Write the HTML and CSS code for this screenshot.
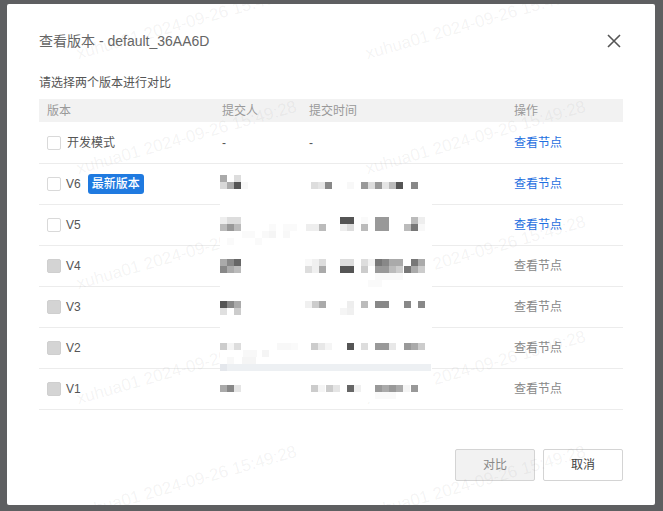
FILE: index.html
```html
<!DOCTYPE html>
<html lang="zh">
<head>
<meta charset="utf-8">
<title>查看版本</title>
<link rel="stylesheet" href="styles.css">
</head>
<body>
<div class="dialog">
  <div class="dialog-head">
    <h1 class="title">查看版本 - default_36AA6D</h1>
    <svg class="close" width="14" height="14" viewBox="0 0 14 14"><path d="M1 1l12 12M13 1L1 13" fill="none" stroke="#555" stroke-width="1.6"/></svg>
  </div>
  <p class="hint">请选择两个版本进行对比</p>
  <div class="row head"><span>版本</span><span>提交人</span><span>提交时间</span><span>操作</span></div>
  <div class="rows">
    <div class="row"><span class="ver"><i class="check"></i><span class="cn">开发模式</span></span><span>-</span><span>-</span><a class="link">查看节点</a></div>
    <div class="row"><span class="ver"><i class="check"></i>V6<b class="badge">最新版本</b></span><span></span><span></span><a class="link">查看节点</a></div>
    <div class="row"><span class="ver"><i class="check"></i>V5</span><span></span><span></span><a class="link">查看节点</a></div>
    <div class="row"><span class="ver"><i class="check off"></i>V4</span><span></span><span></span><a class="link off">查看节点</a></div>
    <div class="row"><span class="ver"><i class="check off"></i>V3</span><span></span><span></span><a class="link off">查看节点</a></div>
    <div class="row"><span class="ver"><i class="check off"></i>V2</span><span></span><span></span><a class="link off">查看节点</a></div>
    <div class="row"><span class="ver"><i class="check off"></i>V1</span><span></span><span></span><a class="link off">查看节点</a></div>
  </div>
  <div class="foot">
    <button class="btn off">对比</button>
    <button class="btn">取消</button>
  </div>
</div>
<div class="marks">
  <span>xuhua01 2024-09-26 15:49:28</span><span>xuhua01 2024-09-26 15:49:28</span><span>xuhua01 2024-09-26 15:49:28</span><span>xuhua01 2024-09-26 15:49:28</span>
  <span>xuhua01 2024-09-26 15:49:28</span><span>xuhua01 2024-09-26 15:49:28</span><span>xuhua01 2024-09-26 15:49:28</span><span>xuhua01 2024-09-26 15:49:28</span>
  <span>xuhua01 2024-09-26 15:49:28</span><span>xuhua01 2024-09-26 15:49:28</span><span>xuhua01 2024-09-26 15:49:28</span><span>xuhua01 2024-09-26 15:49:28</span>
  <span>xuhua01 2024-09-26 15:49:28</span><span>xuhua01 2024-09-26 15:49:28</span><span>xuhua01 2024-09-26 15:49:28</span><span>xuhua01 2024-09-26 15:49:28</span>
  <span>xuhua01 2024-09-26 15:49:28</span><span>xuhua01 2024-09-26 15:49:28</span><span>xuhua01 2024-09-26 15:49:28</span><span>xuhua01 2024-09-26 15:49:28</span>
</div>
<svg class="redaction" width="663" height="511" viewBox="0 0 663 511">
  <rect x="220" y="176" width="212" height="226" fill="#fff"/>
  <!-- V6 -->
  <rect x="220" y="175" width="7" height="7" fill="#aaa"/><rect x="234" y="175" width="7" height="7" fill="#ddd"/>
  <rect x="220" y="182" width="7" height="7" fill="#d8d8d8"/><rect x="227" y="182" width="7" height="7" fill="#aaa"/><rect x="234" y="182" width="7" height="7" fill="#555"/><rect x="241" y="182" width="7" height="7" fill="#f8f8f8"/>
  <rect x="311" y="182" width="7" height="7" fill="#ddd"/><rect x="318" y="182" width="7" height="7" fill="#e5e5e5"/><rect x="325" y="182" width="7" height="7" fill="#888"/><rect x="347" y="182" width="7" height="7" fill="#f8f8f8"/>
  <rect x="361" y="182" width="7" height="7" fill="#999"/><rect x="368" y="182" width="7" height="7" fill="#ddd"/><rect x="375" y="182" width="7" height="7" fill="#999"/><rect x="382" y="182" width="7" height="7" fill="#e5e5e5"/><rect x="389" y="182" width="7" height="7" fill="#bbb"/><rect x="396" y="182" width="7" height="7" fill="#555"/><rect x="411" y="182" width="7" height="7" fill="#888"/>
  <!-- V5 -->
  <rect x="220" y="217" width="7" height="7" fill="#eee"/><rect x="227" y="217" width="7" height="7" fill="#ddd"/><rect x="234" y="217" width="7" height="7" fill="#ddd"/>
  <rect x="340" y="217" width="14" height="7" fill="#555"/><rect x="361" y="217" width="7" height="7" fill="#fafafa"/><rect x="375" y="217" width="14" height="14" fill="#999"/><rect x="411" y="217" width="7" height="7" fill="#bbb"/><rect x="418" y="217" width="7" height="7" fill="#eee"/>
  <rect x="220" y="224" width="7" height="7" fill="#bbb"/><rect x="227" y="224" width="7" height="7" fill="#999"/><rect x="234" y="224" width="7" height="7" fill="#bbb"/>
  <rect x="306" y="224" width="14" height="7" fill="#eee"/><rect x="319" y="224" width="7" height="7" fill="#bbb"/><rect x="340" y="224" width="7" height="7" fill="#eee"/><rect x="347" y="224" width="7" height="7" fill="#ddd"/><rect x="361" y="224" width="7" height="7" fill="#bbb"/>
  <rect x="404" y="224" width="7" height="7" fill="#bbb"/><rect x="411" y="224" width="7" height="7" fill="#777"/><rect x="418" y="224" width="7" height="7" fill="#f8f8f8"/>
  <rect x="269" y="224" width="7" height="7" fill="#fafafa"/><rect x="283" y="224" width="14" height="7" fill="#fafafa"/>
  <rect x="242" y="231" width="13" height="7" fill="#fafafa"/><rect x="262" y="231" width="7" height="7" fill="#f9f9f9"/><rect x="269" y="231" width="7" height="7" fill="#f5f5f5"/><rect x="283" y="231" width="7" height="7" fill="#f8f8f8"/>
  <rect x="227" y="238" width="7" height="7" fill="#fafafa"/><rect x="255" y="238" width="7" height="7" fill="#fafafa"/>
  <!-- V4 -->
  <rect x="220" y="259" width="7" height="7" fill="#aaa"/><rect x="227" y="259" width="7" height="7" fill="#888"/><rect x="234" y="259" width="7" height="7" fill="#666"/>
  <rect x="305" y="259" width="7" height="7" fill="#f8f8f8"/><rect x="312" y="259" width="7" height="7" fill="#f0f0f0"/><rect x="319" y="259" width="7" height="7" fill="#ddd"/><rect x="340" y="259" width="14" height="7" fill="#ddd"/><rect x="361" y="259" width="7" height="7" fill="#ddd"/><rect x="368" y="259" width="7" height="7" fill="#f2f2f2"/>
  <rect x="375" y="259" width="7" height="7" fill="#777"/><rect x="382" y="259" width="7" height="7" fill="#888"/><rect x="389" y="259" width="14" height="7" fill="#aaa"/><rect x="411" y="259" width="7" height="7" fill="#777"/><rect x="418" y="259" width="7" height="7" fill="#aaa"/>
  <rect x="220" y="266" width="7" height="7" fill="#888"/><rect x="227" y="266" width="7" height="7" fill="#aaa"/><rect x="234" y="266" width="7" height="7" fill="#bbb"/>
  <rect x="305" y="266" width="7" height="7" fill="#ddd"/><rect x="312" y="266" width="7" height="7" fill="#f0f0f0"/><rect x="319" y="266" width="7" height="7" fill="#aaa"/><rect x="340" y="266" width="14" height="7" fill="#555"/><rect x="361" y="266" width="7" height="7" fill="#ccc"/>
  <rect x="375" y="266" width="14" height="7" fill="#999"/><rect x="389" y="266" width="7" height="7" fill="#bbb"/><rect x="396" y="266" width="7" height="7" fill="#ccc"/><rect x="404" y="266" width="7" height="7" fill="#777"/><rect x="411" y="266" width="7" height="7" fill="#aaa"/><rect x="418" y="266" width="7" height="7" fill="#ccc"/>
  <rect x="375" y="273" width="28" height="7" fill="#f9f9f9"/><rect x="368" y="280" width="14" height="7" fill="#fafafa"/>
  <!-- V3 -->
  <rect x="220" y="301" width="7" height="7" fill="#555"/><rect x="227" y="301" width="7" height="7" fill="#888"/><rect x="234" y="301" width="7" height="7" fill="#aaa"/>
  <rect x="305" y="301" width="7" height="7" fill="#f0f0f0"/><rect x="312" y="301" width="7" height="7" fill="#ccc"/><rect x="319" y="301" width="7" height="7" fill="#aaa"/><rect x="347" y="301" width="7" height="7" fill="#eee"/><rect x="361" y="301" width="7" height="7" fill="#bbb"/><rect x="375" y="301" width="14" height="7" fill="#888"/><rect x="404" y="301" width="7" height="7" fill="#888"/><rect x="418" y="301" width="7" height="7" fill="#888"/>
  <rect x="220" y="308" width="7" height="7" fill="#e0e0e0"/><rect x="234" y="308" width="7" height="7" fill="#ccc"/><rect x="340" y="308" width="7" height="7" fill="#f5f5f5"/><rect x="347" y="308" width="7" height="7" fill="#f0f0f0"/>
  <!-- V2 -->
  <rect x="220" y="343" width="7" height="7" fill="#ccc"/><rect x="227" y="343" width="7" height="7" fill="#f5f5f5"/><rect x="234" y="343" width="7" height="7" fill="#ddd"/><rect x="277" y="343" width="14" height="7" fill="#f8f8f8"/><rect x="291" y="343" width="7" height="7" fill="#fafafa"/>
  <rect x="311" y="343" width="7" height="7" fill="#ccc"/><rect x="318" y="343" width="7" height="7" fill="#e8e8e8"/><rect x="325" y="343" width="7" height="7" fill="#f5f5f5"/><rect x="347" y="343" width="7" height="7" fill="#555"/><rect x="361" y="343" width="7" height="7" fill="#ddd"/><rect x="375" y="343" width="14" height="7" fill="#999"/><rect x="389" y="343" width="7" height="7" fill="#e8e8e8"/><rect x="404" y="343" width="7" height="7" fill="#999"/><rect x="411" y="343" width="7" height="7" fill="#aaa"/><rect x="418" y="343" width="7" height="7" fill="#ccc"/>
  <rect x="243" y="350" width="14" height="7" fill="#f8f8f8"/><rect x="262" y="350" width="7" height="7" fill="#f5f5f5"/><rect x="227" y="357" width="7" height="7" fill="#f8f8f8"/><rect x="242" y="357" width="14" height="7" fill="#f5f5f5"/>
  <rect x="220" y="364" width="211" height="7" fill="#edf0f3"/><rect x="220" y="364" width="7" height="7" fill="#e4e7ec"/>
  <!-- V1 -->
  <rect x="220" y="385" width="7" height="7" fill="#aaa"/><rect x="227" y="385" width="7" height="7" fill="#888"/><rect x="234" y="385" width="7" height="7" fill="#e5e5e5"/>
  <rect x="311" y="385" width="7" height="7" fill="#ccc"/><rect x="318" y="385" width="7" height="7" fill="#f5f5f5"/><rect x="326" y="385" width="7" height="7" fill="#ccc"/><rect x="333" y="385" width="7" height="7" fill="#e5e5e5"/><rect x="347" y="385" width="7" height="7" fill="#666"/><rect x="354" y="385" width="7" height="7" fill="#f0f0f0"/>
  <rect x="375" y="385" width="7" height="7" fill="#999"/><rect x="382" y="385" width="7" height="7" fill="#aaa"/><rect x="389" y="385" width="7" height="7" fill="#999"/><rect x="396" y="385" width="7" height="7" fill="#aaa"/><rect x="403" y="385" width="7" height="7" fill="#f5f5f5"/><rect x="411" y="385" width="7" height="7" fill="#999"/>
  <rect x="375" y="392" width="21" height="7" fill="#f9f9f9"/>
</svg>
</body>
</html>
```
FILE: styles.css
```css
* { box-sizing: border-box; }
html, body { margin: 0; height: 100%; }
body {
  position: relative;
  overflow: hidden;
  background: #5e5f61;
  padding: 4px 8px 6px 7px;
  font: 12px/18px "Liberation Sans", "Noto Sans CJK SC", sans-serif;
  color: #555;
}
.dialog {
  display: flex;
  flex-direction: column;
  height: 501px;
  padding: 26px 32px 24px;
  background: #fff;
  border-radius: 2px;
}
.dialog-head {
  display: flex;
  align-items: center;
  justify-content: space-between;
  height: 22px;
  margin-bottom: 22px;
}
.title {
  margin: 0;
  font-size: 14px;
  font-weight: 400;
  line-height: 22px;
  color: #666;
}
.close { margin-right: 2px; }
.hint { margin: 0 0 7px; color: #555; }
.row {
  display: grid;
  grid-template-columns: 175px 87px 205px 1fr;
  align-items: center;
  height: 41px;
  padding-left: 8px;
  border-bottom: 1px solid #ececec;
}
.head {
  height: 23px;
  margin-bottom: 1px;
  background: #f2f2f2;
  border-bottom: 0;
  color: #999;
}
.ver { display: flex; align-items: center; }
.check {
  flex: none;
  width: 14px;
  height: 14px;
  margin-right: 5px;
  background: #fff;
  border: 1px solid #d9d9d9;
  border-radius: 2px;
}
.check.off { background: #d4d4d4; border-color: #cfcfcf; }
.cn { margin-left: 1px; }
.badge {
  margin-left: 7px;
  padding: 1px 4px;
  background: #1f7ae0;
  border-radius: 3px;
  color: #fff;
  font-weight: 500;
}
.link { color: #1f6fe0; }
.link.off { color: #888; }
.foot {
  display: flex;
  justify-content: flex-end;
  gap: 8px;
  margin-top: auto;
}
.btn {
  width: 80px;
  height: 32px;
  padding: 0;
  background: #fff;
  border: 1px solid #d4d4d4;
  border-radius: 2px;
  font: inherit;
  color: #444;
}
.btn.off { background: #f2f2f2; color: #888; }
.marks {
  position: absolute;
  left: -209px;
  top: -51px;
  display: grid;
  grid-template-columns: repeat(4, 289px);
  grid-auto-rows: 115px;
  font-size: 17px;
  line-height: 20px;
  color: rgba(110, 110, 110, 0.08);
  white-space: nowrap;
  pointer-events: none;
}
.marks span {
  align-self: end;
  justify-self: start;
  transform-origin: 0 100%;
  transform: rotate(-16deg);
}
.redaction {
  position: absolute;
  left: 0;
  top: 0;
  pointer-events: none;
}
```
